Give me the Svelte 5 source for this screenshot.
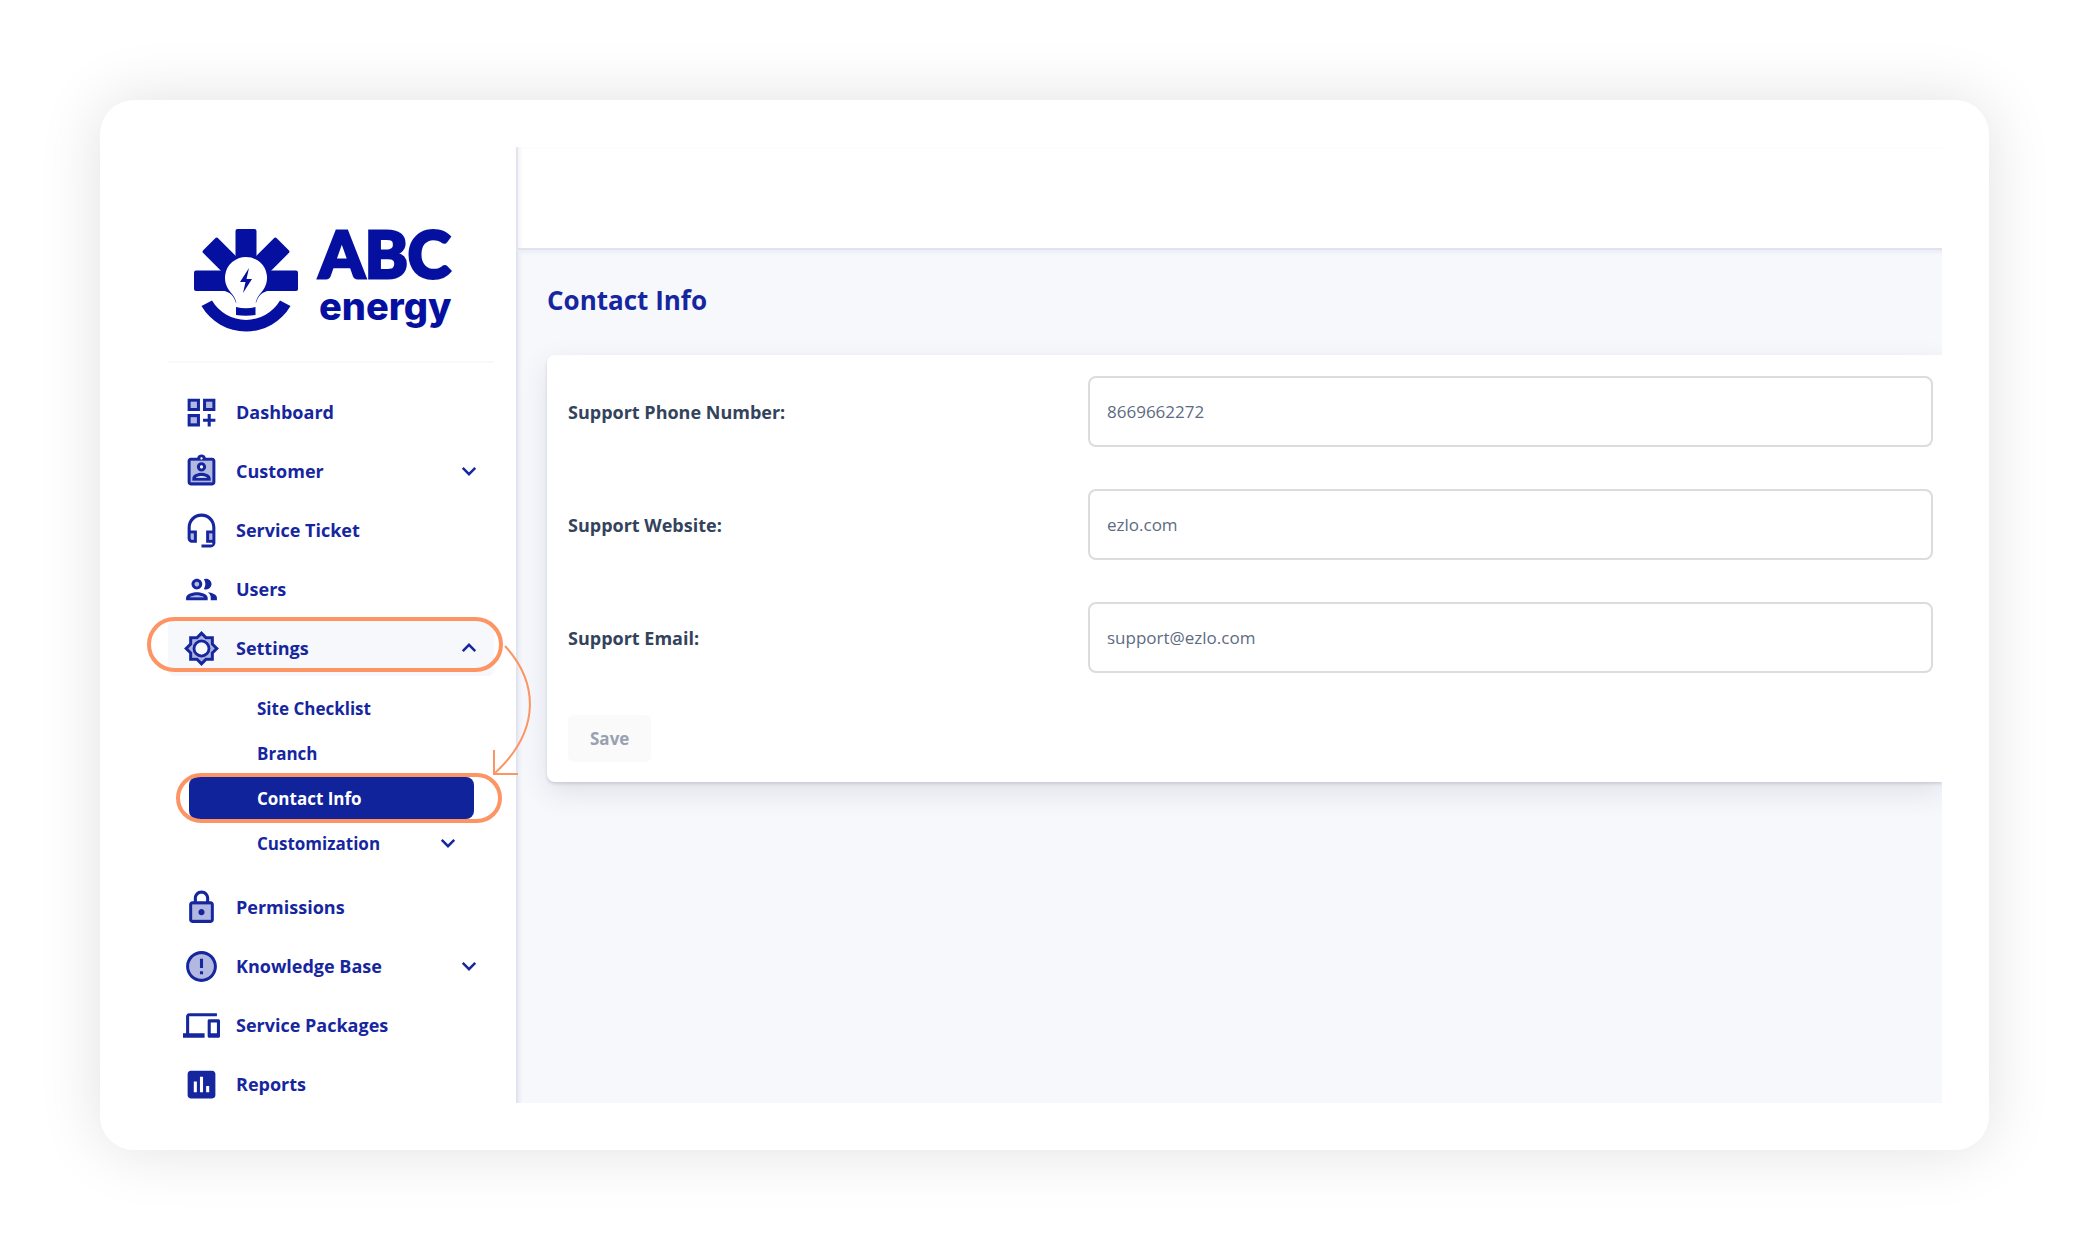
<script>
  const icons = {
    dashboard: {
      tone: 'M5 5h4v4H5zM5 15h4v4H5zM15 5h4v4h-4z',
      line: 'M3 11h8V3H3v8zm2-6h4v4H5V5zm8-2v8h8V3h-8zm6 6h-4V5h4v4zM3 21h8v-8H3v8zm2-6h4v4H5v-4zm13-2h-2v3h-3v2h3v3h2v-3h3v-2h-3z'
    },
    customer: {
      tone: 'M5 5v14h14V5H5zm7 1c1.65 0 3 1.35 3 3s-1.35 3-3 3-3-1.35-3-3 1.35-3 3-3zm6 12H6v-1.53c0-2.5 3.97-3.58 6-3.58s6 1.08 6 3.58V18z',
      line: 'M19 3h-4.18C14.4 1.84 13.3 1 12 1s-2.4.84-2.82 2H5c-1.1 0-2 .9-2 2v14c0 1.1.9 2 2 2h14c1.1 0 2-.9 2-2V5c0-1.1-.9-2-2-2zm-7-.25c.41 0 .75.34.75.75s-.34.75-.75.75-.75-.34-.75-.75.34-.75.75-.75zM19 19H5V5h14v14zM12 12c1.65 0 3-1.35 3-3s-1.35-3-3-3-3 1.35-3 3 1.35 3 3 3zm0-4c.55 0 1 .45 1 1s-.45 1-1 1-1-.45-1-1 .45-1 1-1zm6 8.47c0-2.5-3.97-3.58-6-3.58s-6 1.08-6 3.58V18h12v-1.53zM8.31 16c.69-.56 2.38-1.12 3.69-1.12s3.01.56 3.69 1.12H8.31z'
    },
    headset: {
      tone: 'M7 14v4H6c-.55 0-1-.45-1-1v-3h2zm10 0h2v4h-2z',
      line: 'M12 1c-4.97 0-9 4.03-9 9v7c0 1.66 1.34 3 3 3h3v-8H5v-2c0-3.87 3.13-7 7-7s7 3.13 7 7v2h-4v8h4v1h-7v2h6c1.66 0 3-1.34 3-3V10c0-4.97-4.03-9-9-9zM7 14v4H6c-.55 0-1-.45-1-1v-3h2zm12 4h-2v-4h2v4z'
    },
    users: {
      tone: 'M10.5 8.5a1.5 1.5 0 1 1-3 0 1.5 1.5 0 0 1 3 0zM9 15.75c-1.79 0-3.82.67-4.66 1.25h9.32c-.84-.58-2.87-1.25-4.66-1.25z',
      line: 'M9 13.75c-2.34 0-7 1.17-7 3.5V19h14v-1.75c0-2.33-4.66-3.5-7-3.5zM4.34 17c.84-.58 2.87-1.25 4.66-1.25s3.82.67 4.66 1.25H4.34zM9 12c1.93 0 3.5-1.57 3.5-3.5S10.93 5 9 5 5.5 6.57 5.5 8.5 7.07 12 9 12zm0-5c.83 0 1.5.67 1.5 1.5S9.83 10 9 10s-1.5-.67-1.5-1.5S8.17 7 9 7zm7.04 6.81c1.16.84 1.96 1.96 1.96 3.44V19h4v-1.75c0-2.02-3.5-3.17-5.96-3.44zM15 12c1.93 0 3.5-1.57 3.5-3.5S16.93 5 15 5c-.54 0-1.04.13-1.5.35.63.89 1 1.98 1 3.15s-.37 2.26-1 3.15c.46.22.96.35 1.5.35z'
    },
    settings: {
      tone: 'M18 9.52V6h-3.52L12 3.52 9.52 6H6v3.52L3.52 12 6 14.48V18h3.52L12 20.48 14.48 18H18v-3.52L20.48 12 18 9.52zM12 16a4 4 0 1 1 0-8 4 4 0 0 1 0 8z',
      line: 'M20 8.69V4h-4.69L12 .69 8.69 4H4v4.69L.69 12 4 15.31V20h4.69L12 23.31 15.31 20H20v-4.69L23.31 12 20 8.69zm-2 5.79V18h-3.52L12 20.48 9.52 18H6v-3.52L3.52 12 6 9.52V6h3.52L12 3.52 14.48 6H18v3.52L20.48 12 18 14.48zM12 6.2a5.8 5.8 0 1 0 0 11.6 5.8 5.8 0 0 0 0-11.6zm0 9.8a4 4 0 1 1 0-8 4 4 0 0 1 0 8z'
    },
    lock: {
      tone: 'M6 20h12V10H6v10z',
      line: 'M18 8h-1V6c0-2.76-2.24-5-5-5S7 3.24 7 6v2H6c-1.1 0-2 .9-2 2v10c0 1.1.9 2 2 2h12c1.1 0 2-.9 2-2V10c0-1.1-.9-2-2-2zM9 6c0-1.66 1.34-3 3-3s3 1.34 3 3v2H9V6zm9 14H6V10h12v10zm-6-3c1.1 0 2-.9 2-2s-.9-2-2-2-2 .9-2 2 .9 2 2 2z'
    },
    alert: {
      tone: 'M12 4c-4.42 0-8 3.58-8 8s3.58 8 8 8 8-3.58 8-8-3.58-8-8-8z',
      line: 'M12 2C6.48 2 2 6.48 2 12s4.48 10 10 10 10-4.48 10-10S17.52 2 12 2zm0 18c-4.41 0-8-3.59-8-8s3.59-8 8-8 8 3.59 8 8-3.59 8-8 8zM11 7h2v6h-2zM11 15h2v2h-2z'
    },
    devices: {
      tone: '',
      line: 'M4 6h18V4H4c-1.1 0-2 .9-2 2v11H0v3h14v-3H4V6zm19 2h-6c-.55 0-1 .45-1 1v10c0 .55.45 1 1 1h6c.55 0 1-.45 1-1V9c0-.55-.45-1-1-1zm-1 9h-4v-7h4v7z'
    },
    reports: {
      tone: '',
      line: 'M19 3H5c-1.1 0-2 .9-2 2v14c0 1.1.9 2 2 2h14c1.1 0 2-.9 2-2V5c0-1.1-.9-2-2-2zM9 17H7v-7h2v7zm4 0h-2V7h2v10zm4 0h-2v-4h2v4z'
    }
  };

  const nav = [
    { label: 'Dashboard', icon: 'dashboard' },
    { label: 'Customer', icon: 'customer', group: true },
    { label: 'Service Ticket', icon: 'headset' },
    { label: 'Users', icon: 'users' },
    {
      label: 'Settings',
      icon: 'settings',
      group: true,
      children: [
        { label: 'Site Checklist' },
        { label: 'Branch' },
        { label: 'Contact Info', current: true },
        { label: 'Customization', group: true }
      ]
    },
    { label: 'Permissions', icon: 'lock' },
    { label: 'Knowledge Base', icon: 'alert', group: true },
    { label: 'Service Packages', icon: 'devices' },
    { label: 'Reports', icon: 'reports' }
  ];

  let fields = $state([
    { id: 'phone', label: 'Support Phone Number:', type: 'tel', value: '8669662272' },
    { id: 'website', label: 'Support Website:', type: 'text', value: 'ezlo.com' },
    { id: 'email', label: 'Support Email:', type: 'email', value: 'support@ezlo.com' }
  ]);
</script>

{#snippet chevron(up = false)}
  <svg class="chevron" class:up viewBox="0 0 24 24" aria-hidden="true">
    <path d="M7 9.5l5 5 5-5" />
  </svg>
{/snippet}

<div class="frame">
  <div class="app">
    <aside class="sidebar">
      <a class="logo" href="#home">
        <svg class="logo-mark" viewBox="0 0 104 104" aria-hidden="true">
          <rect x="41.5" y="0" width="21" height="45" rx="2" />
          <rect x="41.5" y="0" width="21" height="45" rx="2" transform="rotate(45 52 52)" />
          <rect x="41.5" y="0" width="21" height="45" rx="2" transform="rotate(-45 52 52)" />
          <rect x="0" y="41.5" width="104" height="20.5" rx="2" />
          <path d="M28 61.5C36 62.5 40 67 42 74h20c2-7 6-11.5 14-12.5z" />
          <path
            class="bulb"
            d="M42.5 76C42 68 38 65.5 34.5 60.5A21 21 0 1 1 69.5 60.5C66 65.5 62 68 61.5 76z"
          />
          <path d="M55 39L46 53h5.5L49 64l9-14h-5.5z" />
          <path d="M42 78q10 2.5 19.5 0v8q-9.5 1.5-19.5 0z" />
          <path d="M7.5 77A51.5 51.5 0 0 0 96.5 77L86 71.5A39.5 39.5 0 0 1 18 71.5z" />
        </svg>
        <span class="logo-text">
          <span class="logo-name">ABC</span>
          <span class="logo-sub">energy</span>
        </span>
      </a>

      <nav>
        <ul class="menu">
          {#each nav as item}
            <li>
              <svelte:element
                this={item.group ? 'button' : 'a'}
                class="row"
                class:open={item.children}
                href={item.group ? undefined : '#' + item.icon}
                type={item.group ? 'button' : undefined}
                aria-expanded={item.group ? !!item.children : undefined}
              >
                <svg class="icon" viewBox="0 0 24 24" aria-hidden="true">
                  <path class="tone" d={icons[item.icon].tone} />
                  <path d={icons[item.icon].line} />
                </svg>
                <span class="text">{item.label}</span>
                {#if item.group}{@render chevron(!!item.children)}{/if}
              </svelte:element>

              {#if item.children}
                <svg class="arrow" viewBox="0 0 40 132" aria-hidden="true">
                  <path d="M12 1C44 36 50 84 1 129M1 105v24h24" />
                </svg>
                <ul class="submenu">
                  {#each item.children as sub}
                    <li>
                      <svelte:element
                        this={sub.group ? 'button' : 'a'}
                        class="sub"
                        class:current={sub.current}
                        href={sub.group ? undefined : '#settings'}
                        type={sub.group ? 'button' : undefined}
                        aria-current={sub.current ? 'page' : undefined}
                      >
                        <span class="text">{sub.label}</span>
                        {#if sub.group}{@render chevron()}{/if}
                      </svelte:element>
                    </li>
                  {/each}
                </ul>
              {/if}
            </li>
          {/each}
        </ul>
      </nav>
    </aside>

    <div class="main">
      <header class="topbar"></header>
      <main class="content">
        <h1>Contact Info</h1>
        <form class="card" onsubmit={(e) => e.preventDefault()}>
          {#each fields as field}
            <div class="field">
              <label for={field.id}>{field.label}</label>
              <input id={field.id} type={field.type} bind:value={field.value} />
            </div>
          {/each}
          <button class="save" type="submit" disabled>Save</button>
        </form>
      </main>
    </div>
  </div>
</div>

<style>
  :global(body) {
    background: #fff;
  }

  .frame {
    --blue: #16269f;
    --orange: #fc9463;
    box-sizing: border-box;
    display: flex;
    min-height: calc(100vh - 201px);
    margin: 100px;
    padding: 47px;
    border-radius: 34px;
    background: #fff;
    box-shadow: 0 0 64px rgba(0, 0, 0, 0.12);
    font-family: 'Open Sans', 'Noto Sans', sans-serif;
    color: var(--blue);
  }

  .app {
    flex: 1;
    display: flex;
    min-width: 0;
  }

  a {
    color: inherit;
    text-decoration: none;
  }

  button {
    font: inherit;
    color: inherit;
    border: 0;
    background: none;
    cursor: pointer;
  }

  ul {
    list-style: none;
    margin: 0;
    padding: 0;
  }

  .sidebar {
    position: relative;
    z-index: 1;
    flex: 0 0 369px;
    box-sizing: border-box;
    padding: 0 22px 0 21px;
  }

  .logo {
    display: flex;
    gap: 21px;
    height: 132px;
    padding: 82px 0 0 26px;
    border-bottom: 2px solid #f9f9fb;
    color: #0510a0;
  }

  .logo-mark {
    width: 104px;
    height: 104px;
    fill: currentColor;
  }

  .logo-mark .bulb {
    fill: #fff;
  }

  .logo-text {
    display: flex;
    flex-direction: column;
  }

  .logo-name {
    font-family: Lato, sans-serif;
    font-size: 65px;
    font-weight: 900;
    line-height: 49px;
    -webkit-text-stroke: 3px currentColor;
  }

  .logo-sub {
    font-family: Inter, sans-serif;
    font-size: 38px;
    font-weight: 800;
    line-height: 56px;
  }

  .menu {
    display: flex;
    flex-direction: column;
    gap: 3px;
    margin: 21px 0 -10px;
  }

  .menu > li {
    position: relative;
  }

  .row,
  .sub {
    position: relative;
    box-sizing: border-box;
    display: flex;
    align-items: center;
    width: 100%;
    font-weight: 700;
    text-align: left;
  }

  .row {
    gap: 16px;
    height: 56px;
    padding: 0 10px 0 15px;
    border-radius: 6px;
    font-size: 18px;
  }

  .row.open {
    background: #f6f8fc;
  }

  .text {
    flex: 1;
  }

  .icon {
    width: 37px;
    height: 37px;
    fill: currentColor;
  }

  .tone {
    opacity: 0.33;
  }

  .chevron {
    width: 30px;
    height: 30px;
    fill: none;
    stroke: currentColor;
    stroke-width: 2;
  }

  .chevron.up {
    transform: rotate(180deg);
  }

  .submenu {
    display: flex;
    flex-direction: column;
    gap: 3px;
    padding: 11px 20px 12px 21px;
  }

  .sub {
    height: 42px;
    padding: 0 11px 0 68px;
    border-radius: 8px;
    font-size: 17px;
  }

  .sub.current {
    background: #10239b;
    color: #fff;
  }

  /* callout rings drawn over the open group and the current page */
  .row.open::after,
  .sub.current::after {
    content: '';
    position: absolute;
    border: 4px solid var(--orange);
    border-radius: 28px;
    pointer-events: none;
  }

  .row.open::after {
    inset: -3px -9px 4px -21px;
  }

  .sub.current::after {
    inset: -4px -28px -4px -13px;
  }

  .arrow {
    position: absolute;
    top: 25px;
    right: -39px;
    width: 40px;
    height: 132px;
    fill: none;
    stroke: var(--orange);
    stroke-width: 2;
    pointer-events: none;
  }

  .main {
    flex: 1;
    display: flex;
    flex-direction: column;
    min-width: 0;
    overflow: hidden;
    border-left: 2px solid #e2e3ee;
    box-shadow: inset 3px 0 3px rgba(70, 70, 130, 0.05);
  }

  .topbar {
    height: 101px;
    border-bottom: 2px solid #e1e2ed;
  }

  .content {
    flex: 1;
    padding: 30px 0 30px 29px;
    background: #f6f8fc;
    box-shadow: inset 3px 3px 3px rgba(70, 70, 130, 0.05);
  }

  h1 {
    margin: 0 0 34px;
    font-size: 26px;
    line-height: 41px;
    font-weight: 700;
  }

  .card {
    display: flex;
    flex-direction: column;
    gap: 42px;
    padding: 21px 9px 20px 21px;
    border-radius: 8px 0 0 8px;
    background: #fff;
    box-shadow:
      0 2px 3px rgba(60, 60, 110, 0.16),
      0 10px 28px rgba(60, 60, 90, 0.12);
  }

  .field {
    display: grid;
    grid-template-columns: 8fr 13fr;
    align-items: center;
  }

  label {
    font-size: 18px;
    font-weight: 700;
    color: #33435c;
  }

  input {
    box-sizing: border-box;
    width: 100%;
    height: 71px;
    padding: 0 17px;
    border: 2px solid #dcdcde;
    border-radius: 8px;
    background: #fff;
    font-family: inherit;
    font-size: 17px;
    color: #5d6b82;
  }

  .save {
    align-self: flex-start;
    height: 47px;
    padding: 0 22px;
    border-radius: 6px;
    background: #fafafb;
    font-size: 17px;
    font-weight: 700;
    color: #98a1b0;
  }
</style>
